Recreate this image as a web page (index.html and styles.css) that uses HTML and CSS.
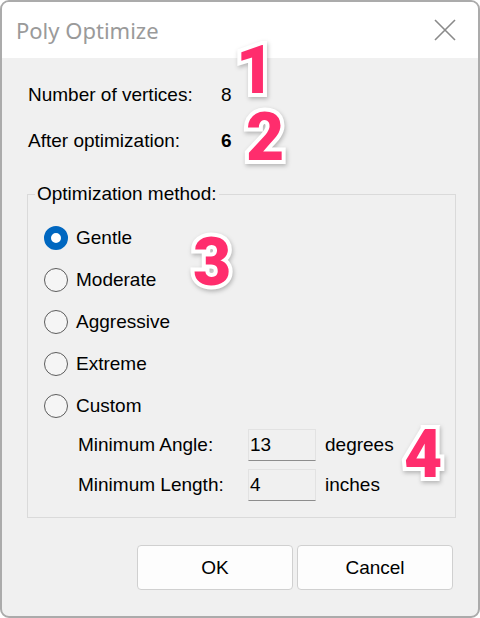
FILE: index.html
```html
<!DOCTYPE html>
<html lang="en">
<head>
    <meta charset="UTF-8">
    <title>Poly Optimize</title>
    <link rel="stylesheet" href="styles.css">
</head>
<body>
    <div class="window">
        <div class="titlebar">
            <span class="title">Poly Optimize</span>
            <svg class="close" width="22" height="22" viewBox="0 0 22 22">
                <path d="M1 1 L21 21 M21 1 L1 21" stroke="#8a8a8a" stroke-width="1.6" fill="none"/>
            </svg>
        </div>
        <div class="content">
            <div class="info">
                <span>Number of vertices:</span><span>8</span>
                <span>After optimization:</span><span class="bold">6</span>
            </div>

            <fieldset class="group">
                <legend>Optimization method:</legend>
                <div class="radios">
                    <div class="radio checked"><span class="dot"></span>Gentle</div>
                    <div class="radio"><span class="dot"></span>Moderate</div>
                    <div class="radio"><span class="dot"></span>Aggressive</div>
                    <div class="radio"><span class="dot"></span>Extreme</div>
                    <div class="radio"><span class="dot"></span>Custom</div>
                </div>
                <div class="params">
                    <span>Minimum Angle:</span><div class="field">13</div><span>degrees</span>
                    <span>Minimum Length:</span><div class="field">4</div><span>inches</span>
                </div>
            </fieldset>

            <div class="buttons">
                <button>OK</button>
                <button>Cancel</button>
            </div>
        </div>

        <!-- callout numbers -->
        <span class="callout n1">1</span>
        <span class="callout n2">2</span>
        <span class="callout n3">3</span>
        <span class="callout n4">4</span>
    </div>
</body>
</html>
```

FILE: styles.css
```css
body {
    margin: 0;
    font-family: "Liberation Sans", Arial, sans-serif;
    font-size: 19px;
    color: #000;
    background: #fff;
}
.window {
    position: relative;
    width: 480px;
    height: 618px;
    box-sizing: border-box;
    border: 2px solid #ababab;
    border-radius: 9px;
    overflow: hidden;
    background: #f0f0f0;
    display: flex;
    flex-direction: column;
}
.titlebar {
    height: 56px;
    background: #fff;
    display: flex;
    align-items: center;
    justify-content: space-between;
    padding: 0 22px 0 14px;
}
.title {
    font-family: "Noto Sans", "Open Sans", sans-serif;
    font-size: 22px;
    color: #9a9a9a;
}
.content {
    padding: 25px 22px 0 25px;
}
.info {
    display: grid;
    grid-template-columns: 193px auto;
    row-gap: 22px;
    line-height: 24px;
    padding-left: 1px;
}
.bold {
    font-weight: bold;
}
.group {
    margin: 29px 0 0 0;
    padding: 0 0 16px 7px;
    border: 1px solid #dadada;
    width: 429px;
    box-sizing: border-box;
}
.group legend {
    padding: 0 2px;
    line-height: 24px;
}
.radios {
    margin-top: 11px;
    margin-left: 9px;
}
.radio {
    height: 42px;
    display: flex;
    align-items: center;
    gap: 8px;
}
.dot {
    width: 24px;
    height: 24px;
    box-sizing: border-box;
    border-radius: 50%;
    border: 1.5px solid #5c5c5c;
    background: #f5f5f5;
}
.radio.checked .dot {
    border: 7px solid #0067c0;
    background: #fff;
}
.params {
    display: grid;
    grid-template-columns: 161px 68px auto;
    column-gap: 9px;
    row-gap: 8px;
    align-items: center;
    margin: 2px 0 0 43px;
}
.field {
    height: 32px;
    box-sizing: border-box;
    border: 1px solid #e2e2e2;
    border-bottom: 1px solid #8d8d8d;
    padding: 2px 0 0 1px;
    line-height: 26px;
    background: #f0f0f0;
}
.buttons {
    display: flex;
    justify-content: flex-end;
    gap: 4px;
    margin-top: 27px;
    padding-right: 3px;
}
.buttons button {
    width: 156px;
    height: 45px;
    background: #fdfdfd;
    border: 1px solid #d0d0d0;
    border-radius: 4px;
    font-family: "Liberation Sans", Arial, sans-serif;
    font-size: 19px;
    color: #000;
}
.callout {
    position: absolute;
    font-family: Roboto, "Open Sans", sans-serif;
    font-weight: 900;
    font-size: 66px;
    line-height: 56px;
    color: #ff2d6d;
    -webkit-text-stroke: 8px #fff;
    paint-order: stroke fill;
    filter: drop-shadow(1px 2px 2px rgba(0, 0, 0, 0.25));
}
.n1 { left: 234px; top: 41px; }
.n2 { left: 244px; top: 108px; }
.n3 { left: 191px; top: 233px; }
.n4 { left: 402px; top: 425px; }
```
